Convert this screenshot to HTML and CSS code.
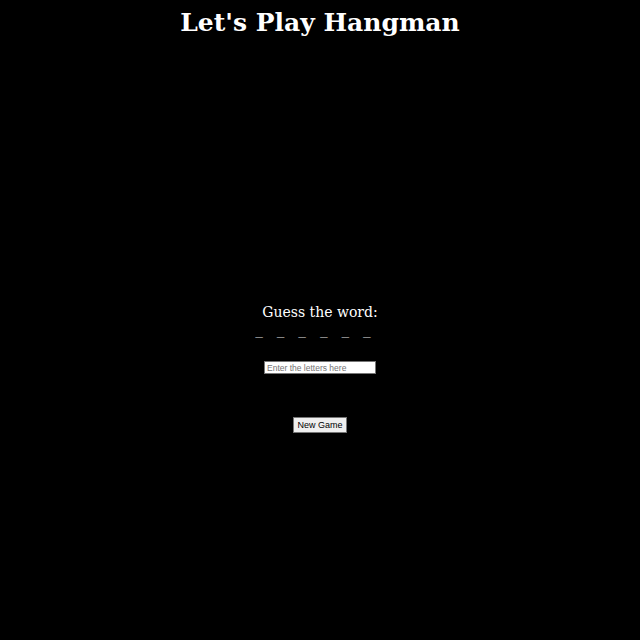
FILE: index.html
```html
<!DOCTYPE html>
<html lang="en">
<head>
    <meta charset="UTF-8">
    <meta name="viewport" content="width=device-width, initial-scale=1.0">
    <title>Hangman</title>
    <link rel="stylesheet" href="styles.css">
</head>
<body>
    <h1>Let's Play Hangman</h1>
    <div class="game">
        <p class="prompt">Guess the word:</p>
        <div id="palavra" class="word">
            <span>_</span><span>_</span><span>_</span><span>_</span><span>_</span><span>_</span>
        </div>
        <input type="text" id="letra" placeholder="Enter the letters here">
        <div class="actions">
            <button id="novoJogo">New Game</button>
        </div>
    </div>
</body>
</html>
```

FILE: styles.css
```css
body {
    background-color: #000;
    color: #fff;
    font-family: "DejaVu Serif", serif;
    margin: 0;
    text-align: center;
}
h1 {
    font-size: 25px;
    margin: 0;
    padding-top: 8px;
}
.game {
    margin-top: 267px;
    display: flex;
    flex-direction: column;
    align-items: center;
}
.prompt {
    font-size: 14px;
    margin: 0;
}
/* cada letra escondida vira um tracinho */
.word {
    display: flex;
    gap: 14.3px;
    color: #9a9a9a;
    font-family: "Liberation Sans", sans-serif;
    font-size: 13px;
    line-height: 13px;
    margin-top: 4px;
    padding-right: 14px;
}
input {
    margin-top: 24px;
    width: 106px;
    height: 9px;
    padding: 1px 2px;
    border: 1px solid #767676;
    font-family: "Liberation Sans", sans-serif;
    font-size: 8.5px;
}
.actions {
    margin-top: 39px;
}
button {
    font-family: "Liberation Sans", sans-serif;
    font-size: 9px;
    padding: 2px 3px;
    background-color: #efefef;
    border: 1px solid #767676;
    border-radius: 0;
}
```
